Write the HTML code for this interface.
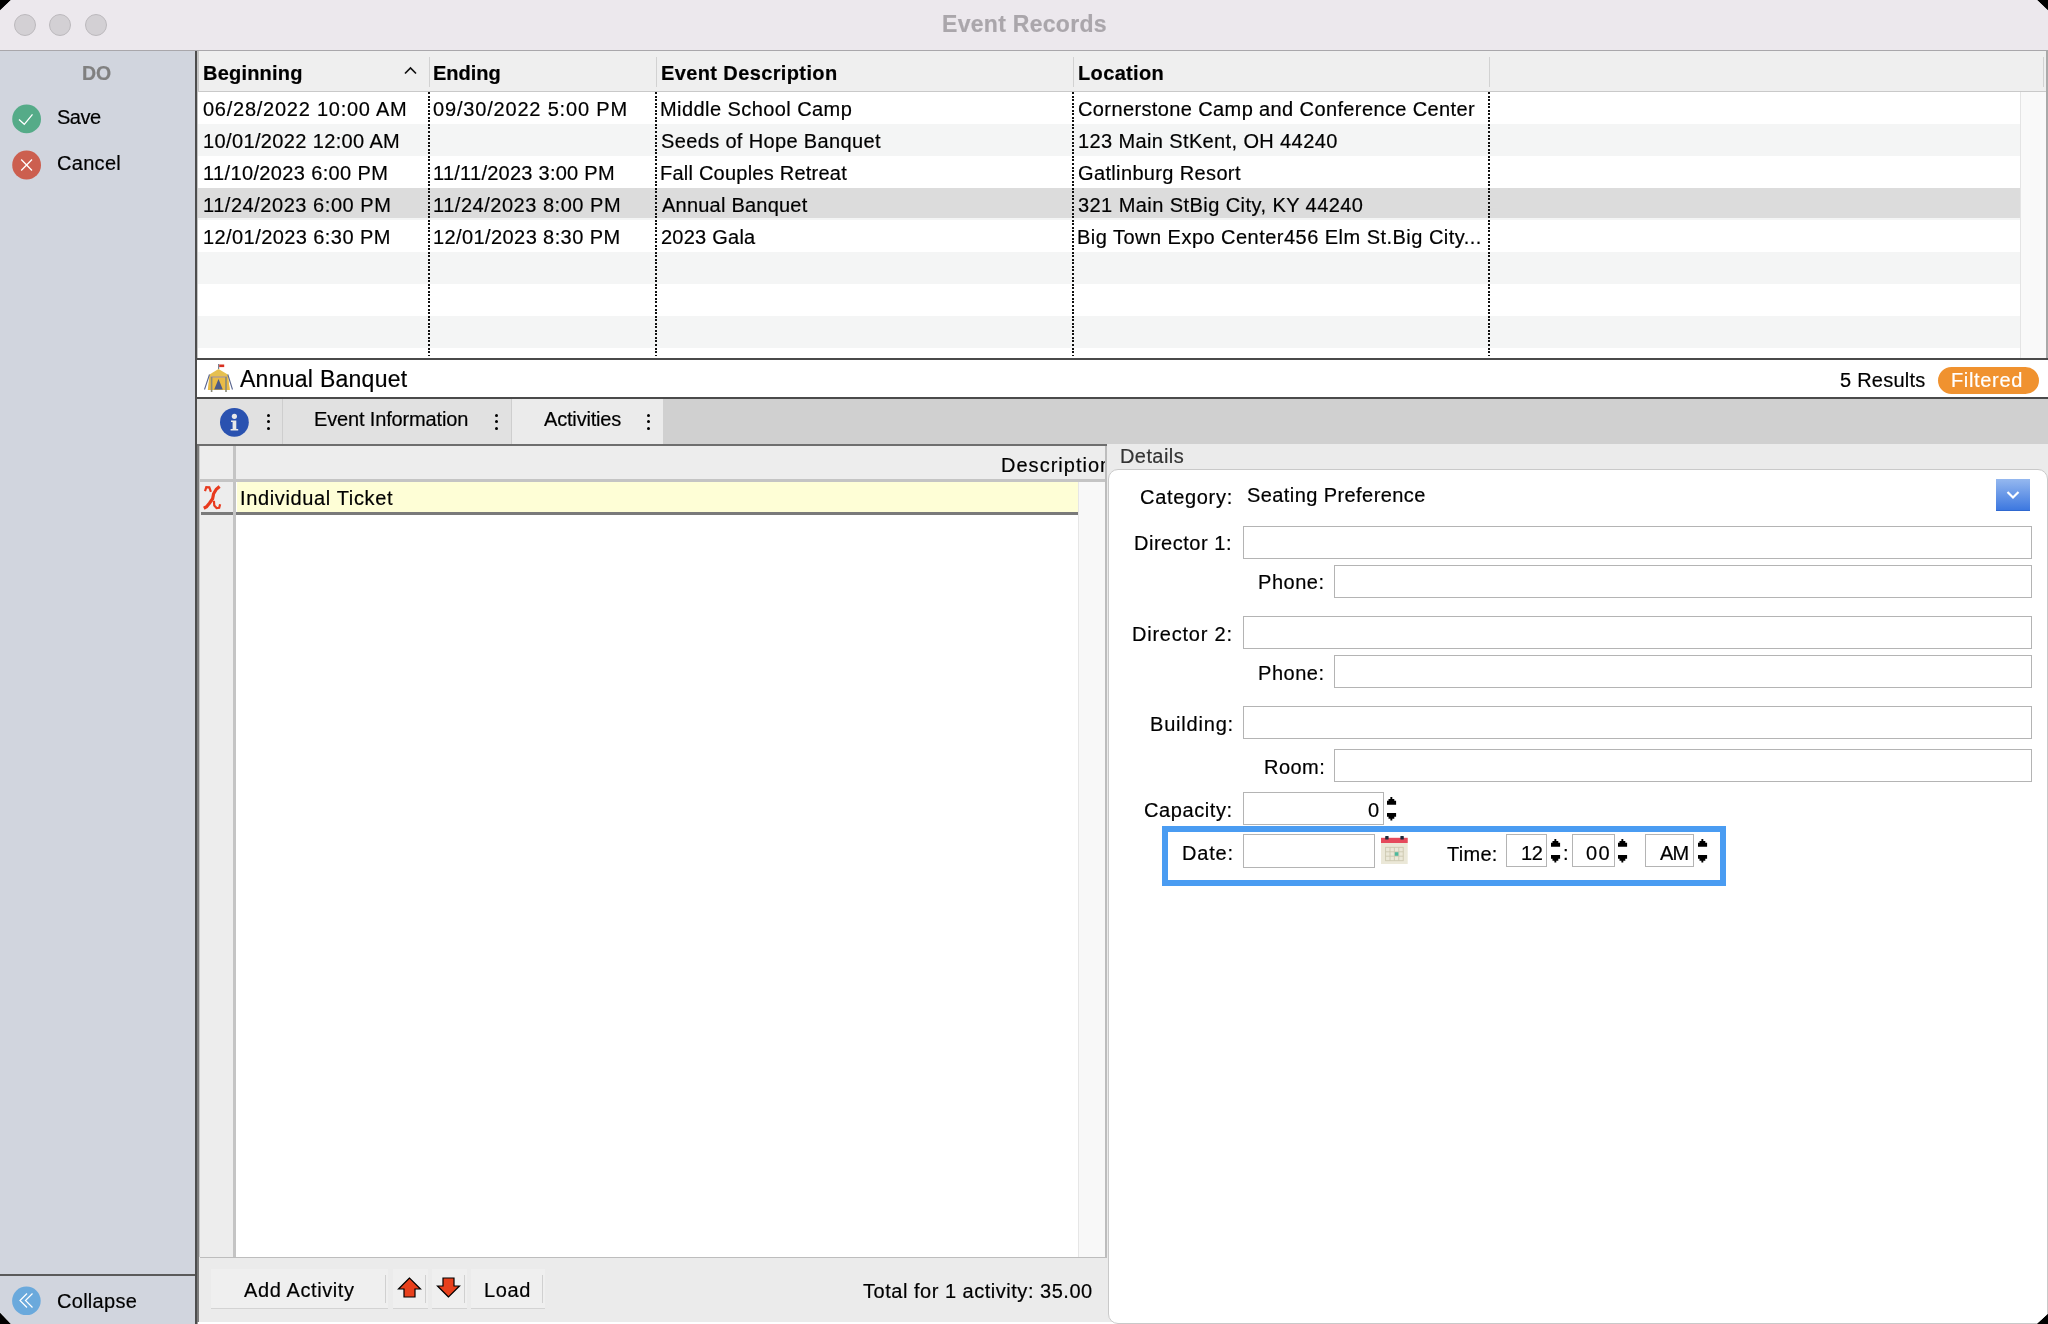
<!DOCTYPE html>
<html><head><meta charset="utf-8"><title>Event Records</title>
<style>
html,body{margin:0;padding:0;background:#000;}
body{width:2048px;height:1324px;overflow:hidden;position:relative;font-family:"Liberation Sans",sans-serif;}
#win{position:absolute;left:0;top:0;width:2048px;height:1324px;overflow:hidden;clip-path:polygon(11px 0,2037px 0,2048px 10.5px,2048px 1313.5px,2036.5px 1324px,11px 1324px,0 1312.5px,0 10.5px);background:#ebebeb;}
#win div,#win svg{position:absolute;}
.t{will-change:transform;white-space:pre;-webkit-text-stroke:0.2px currentColor;}
</style></head><body><div id="win">
<div style="left:0px;top:0px;width:2048px;height:50px;background:#ece8ed"></div>
<div style="left:0px;top:50px;width:2048px;height:1px;background:#a9a7ab"></div>
<div style="left:14px;top:14px;width:20px;height:20px;border-radius:50%;background:#d3d0d4;border:1px solid #bcb9bd"></div>
<div style="left:49px;top:14px;width:20px;height:20px;border-radius:50%;background:#d3d0d4;border:1px solid #bcb9bd"></div>
<div style="left:85px;top:14px;width:20px;height:20px;border-radius:50%;background:#d3d0d4;border:1px solid #bcb9bd"></div>
<div class="t" style="left:941.80px;top:10.10px;font-size:23px;line-height:28px;font-weight:700;letter-spacing:0.292px;color:#aaa6ab;">Event Records</div>
<div style="left:0px;top:51px;width:195px;height:1273px;background:#d1d5de"></div>
<div style="left:195px;top:51px;width:2px;height:1273px;background:#4d4d4d"></div>
<div style="left:197px;top:51px;width:1px;height:1273px;background:#9a9a9a"></div>
<div class="t" style="left:82.00px;top:62.06px;font-size:19.5px;line-height:23px;font-weight:700;letter-spacing:0.000px;color:#808080;">DO</div>
<svg style="left:12px;top:104px" width="30" height="30" viewBox="0 0 30 30"><circle cx="14.6" cy="14.9" r="14.4" fill="#55ab88"/><path d="M7 15.5 L12.3 20.3 L20.5 10.3" stroke="#fff" stroke-width="1.3" fill="none"/></svg>
<div class="t" style="left:57.00px;top:105.39px;font-size:20px;line-height:24px;font-weight:400;letter-spacing:-0.500px;color:#000;">Save</div>
<svg style="left:12px;top:150px" width="30" height="30" viewBox="0 0 30 30"><circle cx="14.6" cy="15" r="14.4" fill="#cc5f4f"/><path d="M9.2 9.5 L20 20.5 M20 9.5 L9.2 20.5" stroke="#fff" stroke-width="1.3" fill="none"/></svg>
<div class="t" style="left:57.00px;top:151.39px;font-size:20px;line-height:24px;font-weight:400;letter-spacing:0.300px;color:#000;">Cancel</div>
<div style="left:0px;top:1274px;width:195px;height:2px;background:#5a5a5a"></div>
<svg style="left:12px;top:1286px" width="30" height="30" viewBox="0 0 30 30"><circle cx="14.4" cy="14.8" r="14.3" fill="#6aa9dc"/><path d="M15 7.5 L8 14.5 L15 21.5 M20.5 7.5 L13.5 14.5 L20.5 21.5" stroke="#fff" stroke-width="1.2" fill="none"/></svg>
<div class="t" style="left:57.00px;top:1288.89px;font-size:20px;line-height:24px;font-weight:400;letter-spacing:0.286px;color:#000;">Collapse</div>
<div style="left:197px;top:51px;width:2px;height:307px;background:#c4c4c4"></div>
<div style="left:199px;top:51px;width:1849px;height:41px;background:#efefef"></div>
<div style="left:198px;top:91px;width:1850px;height:1px;background:#c9c9c9"></div>
<div style="left:429px;top:57px;width:1px;height:30px;background:#d2d2d2"></div>
<div style="left:656px;top:57px;width:1px;height:30px;background:#d2d2d2"></div>
<div style="left:1073px;top:57px;width:1px;height:30px;background:#d2d2d2"></div>
<div style="left:1489px;top:57px;width:1px;height:30px;background:#d2d2d2"></div>
<div style="left:2043px;top:57px;width:1px;height:30px;background:#d2d2d2"></div>
<div class="t" style="left:202.50px;top:61.29px;font-size:20px;line-height:24px;font-weight:700;letter-spacing:0.212px;color:#000;">Beginning</div>
<svg style="left:404px;top:66px" width="13" height="9" viewBox="0 0 13 9"><path d="M1 7.5 L6.5 2 L12 7.5" stroke="#111" stroke-width="1.7" fill="none"/></svg>
<div class="t" style="left:433.30px;top:61.29px;font-size:20px;line-height:24px;font-weight:700;letter-spacing:0.000px;color:#000;">Ending</div>
<div class="t" style="left:660.80px;top:61.29px;font-size:20px;line-height:24px;font-weight:700;letter-spacing:0.381px;color:#000;">Event Description</div>
<div class="t" style="left:1078.00px;top:61.29px;font-size:20px;line-height:24px;font-weight:700;letter-spacing:0.357px;color:#000;">Location</div>
<div style="left:198px;top:92px;width:1822px;height:32px;background:#ffffff"></div>
<div class="t" style="left:202.50px;top:96.69px;font-size:20px;line-height:24px;font-weight:400;letter-spacing:0.750px;color:#000;">06/28/2022 10:00 AM</div>
<div class="t" style="left:433.30px;top:96.69px;font-size:20px;line-height:24px;font-weight:400;letter-spacing:0.818px;color:#000;">09/30/2022 5:00 PM</div>
<div class="t" style="left:659.80px;top:96.69px;font-size:20px;line-height:24px;font-weight:400;letter-spacing:0.429px;color:#000;">Middle School Camp</div>
<div class="t" style="left:1078.00px;top:96.69px;font-size:20px;line-height:24px;font-weight:400;letter-spacing:0.386px;color:#000;">Cornerstone Camp and Conference Center</div>
<div style="left:198px;top:124px;width:1822px;height:32px;background:#f4f5f5"></div>
<div class="t" style="left:202.50px;top:128.69px;font-size:20px;line-height:24px;font-weight:400;letter-spacing:0.367px;color:#000;">10/01/2022 12:00 AM</div>
<div class="t" style="left:660.80px;top:128.69px;font-size:20px;line-height:24px;font-weight:400;letter-spacing:0.355px;color:#000;">Seeds of Hope Banquet</div>
<div class="t" style="left:1078.00px;top:128.69px;font-size:20px;line-height:24px;font-weight:400;letter-spacing:0.379px;color:#000;">123 Main StKent, OH 44240</div>
<div style="left:198px;top:156px;width:1822px;height:32px;background:#ffffff"></div>
<div class="t" style="left:202.50px;top:160.69px;font-size:20px;line-height:24px;font-weight:400;letter-spacing:0.365px;color:#000;">11/10/2023 6:00 PM</div>
<div class="t" style="left:433.30px;top:160.69px;font-size:20px;line-height:24px;font-weight:400;letter-spacing:0.259px;color:#000;">11/11/2023 3:00 PM</div>
<div class="t" style="left:659.80px;top:160.69px;font-size:20px;line-height:24px;font-weight:400;letter-spacing:0.232px;color:#000;">Fall Couples Retreat</div>
<div class="t" style="left:1078.00px;top:160.69px;font-size:20px;line-height:24px;font-weight:400;letter-spacing:0.356px;color:#000;">Gatlinburg Resort</div>
<div style="left:198px;top:188px;width:1822px;height:32px;background:#f4f5f5"></div>
<div style="left:198px;top:188px;width:1822px;height:30px;background:#dcdcdc"></div>
<div class="t" style="left:202.50px;top:192.69px;font-size:20px;line-height:24px;font-weight:400;letter-spacing:0.541px;color:#000;">11/24/2023 6:00 PM</div>
<div class="t" style="left:433.30px;top:192.69px;font-size:20px;line-height:24px;font-weight:400;letter-spacing:0.524px;color:#000;">11/24/2023 8:00 PM</div>
<div class="t" style="left:661.80px;top:192.69px;font-size:20px;line-height:24px;font-weight:400;letter-spacing:0.223px;color:#000;">Annual Banquet</div>
<div class="t" style="left:1078.00px;top:192.69px;font-size:20px;line-height:24px;font-weight:400;letter-spacing:0.436px;color:#000;">321 Main StBig City, KY 44240</div>
<div style="left:198px;top:220px;width:1822px;height:32px;background:#ffffff"></div>
<div class="t" style="left:202.50px;top:224.69px;font-size:20px;line-height:24px;font-weight:400;letter-spacing:0.424px;color:#000;">12/01/2023 6:30 PM</div>
<div class="t" style="left:433.30px;top:224.69px;font-size:20px;line-height:24px;font-weight:400;letter-spacing:0.406px;color:#000;">12/01/2023 8:30 PM</div>
<div class="t" style="left:660.80px;top:224.69px;font-size:20px;line-height:24px;font-weight:400;letter-spacing:0.238px;color:#000;">2023 Gala</div>
<div class="t" style="left:1077.00px;top:224.69px;font-size:20px;line-height:24px;font-weight:400;letter-spacing:0.473px;color:#000;">Big Town Expo Center456 Elm St.Big City...</div>
<div style="left:198px;top:252px;width:1822px;height:32px;background:#f4f5f5"></div>
<div style="left:198px;top:284px;width:1822px;height:32px;background:#ffffff"></div>
<div style="left:198px;top:316px;width:1822px;height:32px;background:#f4f5f5"></div>
<div style="left:198px;top:348px;width:1822px;height:10px;background:#ffffff"></div>
<div style="left:428px;top:92px;width:2px;height:264px;background:repeating-linear-gradient(to bottom,#111 0,#111 2px,transparent 2px,transparent 3.55px);width:2px"></div>
<div style="left:655px;top:92px;width:2px;height:264px;background:repeating-linear-gradient(to bottom,#111 0,#111 2px,transparent 2px,transparent 3.55px);width:2px"></div>
<div style="left:1072px;top:92px;width:2px;height:264px;background:repeating-linear-gradient(to bottom,#111 0,#111 2px,transparent 2px,transparent 3.55px);width:2px"></div>
<div style="left:1488px;top:92px;width:2px;height:264px;background:repeating-linear-gradient(to bottom,#111 0,#111 2px,transparent 2px,transparent 3.55px);width:2px"></div>
<div style="left:2020px;top:92px;width:26px;height:266px;background:#f9f9f9;border-left:1px solid #e4e4e4;box-sizing:border-box"></div>
<div style="left:2046px;top:51px;width:2px;height:307px;background:#a9a9a9"></div>
<div style="left:197px;top:358px;width:1851px;height:2px;background:#4a4a4a"></div>
<div style="left:197px;top:360px;width:1851px;height:37px;background:#fff"></div>
<div style="left:197px;top:397px;width:1851px;height:2px;background:#4a4a4a"></div>
<svg style="left:203px;top:362px" width="32" height="32" viewBox="203 362 32 32">
<path d="M218.5 369 L209.5 374.5 L207.8 390 L229.8 390 L227.8 374.5 Z" fill="#e6c050"/>
<path d="M209.8 376 L208 390 L229.8 390 L228 376 Z" fill="#ebb840" opacity="0.6"/>
<rect x="210.8" y="376" width="16" height="2" fill="#c2a67c"/>
<rect x="210.8" y="377" width="1.6" height="15" fill="#8b8a78"/>
<rect x="225.2" y="377" width="1.6" height="15" fill="#8b8a78"/>
<path d="M218.5 379 L214.2 389.5 L222.8 389.5 Z" fill="#4c5a88"/>
<rect x="218" y="364" width="1.2" height="5" fill="#7a8290"/>
<rect x="219.2" y="364.5" width="5" height="2.6" fill="#d83020"/>
<path d="M209.5 374.5 L204.5 389.5 M227.8 374.5 L232.5 389.5" stroke="#5a6690" stroke-width="1.1"/>
</svg>
<div class="t" style="left:240.00px;top:365.30px;font-size:23px;line-height:28px;font-weight:400;letter-spacing:0.269px;color:#000;">Annual Banquet</div>
<div class="t" style="left:1840.20px;top:368.09px;font-size:20px;line-height:24px;font-weight:400;letter-spacing:0.250px;color:#000;">5 Results</div>
<div style="left:1938px;top:367px;width:101px;height:27px;background:#f0922f;border-radius:13.5px"></div>
<div class="t" style="left:1951.00px;top:368.09px;font-size:20px;line-height:24px;font-weight:400;letter-spacing:0.657px;color:#fff;">Filtered</div>
<div style="left:197px;top:399px;width:1851px;height:45px;background:#d0d0d0"></div>
<div style="left:197px;top:399px;width:85px;height:45px;background:#e1e1e1"></div>
<div style="left:282px;top:399px;width:1px;height:45px;background:#cecece"></div>
<div style="left:283px;top:399px;width:228px;height:45px;background:#e1e1e1"></div>
<div style="left:511px;top:399px;width:1px;height:45px;background:#cecece"></div>
<div style="left:512px;top:399px;width:151px;height:45px;background:#ebebeb"></div>
<div style="left:197px;top:444px;width:909.5px;height:2px;background:#6e6e6e"></div>
<svg style="left:219px;top:407px" width="31" height="31" viewBox="219 407 31 31"><circle cx="234.4" cy="422.3" r="14.4" fill="#2a52b0"/><circle cx="234.4" cy="416.3" r="2.6" fill="#e8e8e8"/><path d="M231 420.5 L236.3 420.5 L236.3 429 L238.2 429 L238.2 430.6 L230.6 430.6 L230.6 429 L232.6 429 L232.6 422 L231 422 Z" fill="#e8e8e8"/></svg>
<div style="left:266.6px;top:413.8px;width:3px;height:3px;border-radius:50%;background:#000"></div>
<div style="left:266.6px;top:420.3px;width:3px;height:3px;border-radius:50%;background:#000"></div>
<div style="left:266.6px;top:426.8px;width:3px;height:3px;border-radius:50%;background:#000"></div>
<div style="left:495.1px;top:413.8px;width:3px;height:3px;border-radius:50%;background:#000"></div>
<div style="left:495.1px;top:420.3px;width:3px;height:3px;border-radius:50%;background:#000"></div>
<div style="left:495.1px;top:426.8px;width:3px;height:3px;border-radius:50%;background:#000"></div>
<div style="left:647.1px;top:413.8px;width:3px;height:3px;border-radius:50%;background:#000"></div>
<div style="left:647.1px;top:420.3px;width:3px;height:3px;border-radius:50%;background:#000"></div>
<div style="left:647.1px;top:426.8px;width:3px;height:3px;border-radius:50%;background:#000"></div>
<div class="t" style="left:313.80px;top:407.09px;font-size:20px;line-height:24px;font-weight:400;letter-spacing:-0.150px;color:#000;">Event Information</div>
<div class="t" style="left:543.90px;top:407.09px;font-size:20px;line-height:24px;font-weight:400;letter-spacing:-0.178px;color:#000;">Activities</div>
<div style="left:198px;top:446px;width:1850px;height:876px;background:#ebebeb"></div>
<div style="left:198px;top:1322px;width:1850px;height:2px;background:#fff"></div>
<div style="left:197px;top:446px;width:2px;height:876px;background:#7c7c7c"></div>
<div style="left:199px;top:446px;width:2px;height:811px;background:#c8c8c8"></div>
<div style="left:200px;top:446px;width:905px;height:811px;background:#fff"></div>
<div style="left:200px;top:446px;width:905px;height:33px;background:#ededed"></div>
<div style="left:200px;top:446px;width:33px;height:811px;background:#ededed"></div>
<div style="left:200px;top:479px;width:905px;height:3px;background:#c4c4c4"></div>
<div style="left:233px;top:446px;width:3px;height:811px;background:#c4c4c4"></div>
<div style="left:237px;top:482px;width:841px;height:30px;background:#fefed6"></div>
<div style="left:201px;top:512px;width:32px;height:2.5px;background:#7a7a7a"></div>
<div style="left:236px;top:512px;width:842px;height:2.5px;background:#7a7a7a"></div>
<div style="left:1078px;top:482px;width:27px;height:775px;background:#f8f8f8;border-left:1px solid #e6e6e6;box-sizing:border-box"></div>
<div style="left:1105px;top:446px;width:2px;height:811px;background:#bdbdbd"></div>
<div style="left:200px;top:1256.5px;width:907px;height:1.5px;background:#bdbdbd"></div>
<div class="t" style="left:1000.80px;top:452.79px;font-size:20px;line-height:24px;font-weight:400;letter-spacing:1.020px;color:#000;">Description</div>
<div style="left:1105px;top:446px;width:2px;height:34px;background:#bdbdbd"></div>
<div style="left:1107px;top:446px;width:14px;height:34px;background:#ebebeb"></div>
<svg style="left:202px;top:484px" width="22" height="28" viewBox="202 484 22 28"><g stroke="#e83a1e" fill="none" stroke-linejoin="miter" stroke-linecap="butt"><path d="M219.6 486.6 L216.3 489.3 L213.6 493.8 L212.6 498.8 L209.6 503 L206.6 506.8 L203.8 508.2" stroke-width="3.2"/><path d="M205 491.2 L206.3 487.2 L209.3 487.3 L210.9 491.8" stroke-width="2.2"/><path d="M213.9 500.8 L214.3 505.6 L216.6 508 L219.2 507.8 L220.1 504.2" stroke-width="2.2"/></g></svg>
<div class="t" style="left:240.20px;top:485.69px;font-size:20px;line-height:24px;font-weight:400;letter-spacing:0.637px;color:#000;">Individual Ticket</div>
<div style="left:211px;top:1269px;width:177px;height:40px;background:#efefef;border-bottom:1.5px solid #d3d3d3;box-sizing:border-box"></div>
<div style="left:385px;top:1275px;width:1px;height:28px;background:#d0d0d0"></div>
<div style="left:392.6px;top:1269px;width:35px;height:40px;background:#efefef;border-bottom:1.5px solid #d3d3d3;box-sizing:border-box"></div>
<div style="left:424.6px;top:1275px;width:1px;height:28px;background:#d0d0d0"></div>
<div style="left:431.8px;top:1269px;width:35px;height:40px;background:#efefef;border-bottom:1.5px solid #d3d3d3;box-sizing:border-box"></div>
<div style="left:463.8px;top:1275px;width:1px;height:28px;background:#d0d0d0"></div>
<div style="left:470.9px;top:1269px;width:74px;height:40px;background:#efefef;border-bottom:1.5px solid #d3d3d3;box-sizing:border-box"></div>
<div style="left:541.9px;top:1275px;width:1px;height:28px;background:#d0d0d0"></div>
<div class="t" style="left:244.00px;top:1278.39px;font-size:20px;line-height:24px;font-weight:400;letter-spacing:0.600px;color:#000;">Add Activity</div>
<div class="t" style="left:483.90px;top:1278.39px;font-size:20px;line-height:24px;font-weight:400;letter-spacing:0.667px;color:#000;">Load</div>
<svg style="left:396px;top:1276px" width="28" height="24" viewBox="396 1276 28 24"><path d="M409.5 1278 L398.5 1289 L404 1289 L404 1297 L415 1297 L415 1289 L420.5 1289 Z" fill="#e8401c" stroke="#000" stroke-width="1.2" stroke-linejoin="miter"/></svg>
<svg style="left:435px;top:1276px" width="28" height="24" viewBox="435 1276 28 24"><path d="M448.5 1297 L437.5 1286 L443 1286 L443 1278 L454 1278 L454 1286 L459.5 1286 Z" fill="#e8401c" stroke="#000" stroke-width="1.2"/></svg>
<div class="t" style="left:862.70px;top:1278.79px;font-size:20px;line-height:24px;font-weight:400;letter-spacing:0.519px;color:#000;">Total for 1 activity: 35.00</div>
<div class="t" style="left:1119.70px;top:444.29px;font-size:20px;line-height:24px;font-weight:400;letter-spacing:0.417px;color:#333;">Details</div>
<div style="left:1108px;top:468.5px;width:940px;height:855px;background:#fff;border:1.5px solid #c9c9c9;border-radius:10px;box-sizing:border-box"></div>
<div class="t" style="left:1140.00px;top:485.29px;font-size:20px;line-height:24px;font-weight:400;letter-spacing:0.688px;color:#000;">Category:</div>
<div class="t" style="left:1246.50px;top:483.39px;font-size:20px;line-height:24px;font-weight:400;letter-spacing:0.418px;color:#000;">Seating Preference</div>
<div style="left:1996px;top:479px;width:34px;height:32px;background:linear-gradient(#95b8ef,#3d78e0);border-bottom:1px solid #2f68d0;box-sizing:border-box"></div>
<svg style="left:2005px;top:489px" width="16" height="12" viewBox="0 0 16 12"><path d="M2.5 3 L8 8.5 L13.5 3" stroke="#fff" stroke-width="2.2" fill="none"/></svg>
<div style="left:1243.2px;top:525.7px;width:788.6px;height:33px;background:#fff;border:1.2px solid #b4b4b4;box-sizing:border-box"></div>
<div class="t" style="left:1133.70px;top:531.49px;font-size:20px;line-height:24px;font-weight:400;letter-spacing:0.520px;color:#000;">Director 1:</div>
<div style="left:1334.4px;top:564.8px;width:697.4px;height:33px;background:#fff;border:1.2px solid #b4b4b4;box-sizing:border-box"></div>
<div class="t" style="left:1258.00px;top:570.49px;font-size:20px;line-height:24px;font-weight:400;letter-spacing:0.540px;color:#000;">Phone:</div>
<div style="left:1243.2px;top:616.3px;width:788.6px;height:33.2px;background:#fff;border:1.2px solid #b4b4b4;box-sizing:border-box"></div>
<div class="t" style="left:1132.20px;top:622.19px;font-size:20px;line-height:24px;font-weight:400;letter-spacing:0.770px;color:#000;">Director 2:</div>
<div style="left:1334.4px;top:655.3px;width:697.4px;height:33.2px;background:#fff;border:1.2px solid #b4b4b4;box-sizing:border-box"></div>
<div class="t" style="left:1258.00px;top:660.89px;font-size:20px;line-height:24px;font-weight:400;letter-spacing:0.540px;color:#000;">Phone:</div>
<div style="left:1243.2px;top:706.3px;width:788.6px;height:33.2px;background:#fff;border:1.2px solid #b4b4b4;box-sizing:border-box"></div>
<div class="t" style="left:1149.50px;top:712.39px;font-size:20px;line-height:24px;font-weight:400;letter-spacing:0.800px;color:#000;">Building:</div>
<div style="left:1334.1px;top:749.3px;width:697.7px;height:32.8px;background:#fff;border:1.2px solid #b4b4b4;box-sizing:border-box"></div>
<div class="t" style="left:1263.60px;top:754.99px;font-size:20px;line-height:24px;font-weight:400;letter-spacing:0.475px;color:#000;">Room:</div>
<div style="left:1243.2px;top:791.6px;width:140.4px;height:33px;background:#fff;border:1.2px solid #b4b4b4;box-sizing:border-box"></div>
<div class="t" style="left:1143.60px;top:797.69px;font-size:20px;line-height:24px;font-weight:400;letter-spacing:0.600px;color:#000;">Capacity:</div>
<div class="t" style="left:1366.50px;top:797.69px;font-size:20px;line-height:24px;font-weight:400;letter-spacing:0.000px;color:#000;margin-left:1.3px">0</div>
<svg style="left:1386.9px;top:797px" width="10" height="24" viewBox="0 0 10 24"><path d="M3.4 0 H5.3 V1.9 H7.3 V3.8 H9.1 V7.7 H0 V3.8 H1.5 V1.9 H3.4 Z M0 16.1 H9.1 V19.8 H7.3 V21.7 H5.3 V23.6 H3.4 V21.7 H1.5 V19.8 H0 Z" fill="#000"/></svg>
<div style="left:1162px;top:826px;width:564px;height:60px;border:6px solid #4a9cf2;box-sizing:border-box"></div>
<div class="t" style="left:1181.90px;top:841.49px;font-size:20px;line-height:24px;font-weight:400;letter-spacing:0.825px;color:#000;">Date:</div>
<div style="left:1243.2px;top:834.4px;width:131.6px;height:33.2px;background:#fff;border:1.2px solid #b4b4b4;box-sizing:border-box"></div>
<svg style="left:1381px;top:836px" width="27" height="28" viewBox="0 0 27 28">
<rect x="0" y="2" width="26.7" height="26" fill="#ebe8d8"/>
<rect x="0" y="1.8" width="26.7" height="5.2" fill="#e54a5c"/>
<rect x="4.2" y="0" width="3.4" height="3.6" rx="0.6" fill="#1f2a3a"/><rect x="19.4" y="0" width="3.4" height="3.6" rx="0.6" fill="#1f2a3a"/>
<g stroke="#cdc8b0" stroke-width="0.9" fill="none"><rect x="4.6" y="11.3" width="17.6" height="13.4"/><path d="M9 11.3 V24.7 M13.4 11.3 V24.7 M17.8 11.3 V24.7 M4.6 15.8 H22.2 M4.6 20.2 H22.2"/></g>
<rect x="13.8" y="16.2" width="3.6" height="3.6" fill="#4db89c"/>
</svg>
<div class="t" style="left:1446.90px;top:841.89px;font-size:20px;line-height:24px;font-weight:400;letter-spacing:0.275px;color:#000;">Time:</div>
<div style="left:1506.2px;top:834.2px;width:40.4px;height:33.3px;background:#fff;border:1.2px solid #b4b4b4;box-sizing:border-box"></div>
<div class="t" style="left:1521.30px;top:840.59px;font-size:20px;line-height:24px;font-weight:400;letter-spacing:-0.400px;color:#000;">12</div>
<svg style="left:1550.7px;top:839.1px" width="10" height="24" viewBox="0 0 10 24"><path d="M3.4 0 H5.3 V1.9 H7.3 V3.8 H9.1 V7.7 H0 V3.8 H1.5 V1.9 H3.4 Z M0 16.1 H9.1 V19.8 H7.3 V21.7 H5.3 V23.6 H3.4 V21.7 H1.5 V19.8 H0 Z" fill="#000"/></svg>
<div class="t" style="left:1562.70px;top:840.59px;font-size:20px;line-height:24px;font-weight:400;letter-spacing:0.000px;color:#000;">:</div>
<div style="left:1572px;top:834.2px;width:42.5px;height:33.3px;background:#fff;border:1.2px solid #b4b4b4;box-sizing:border-box"></div>
<div class="t" style="left:1585.90px;top:840.59px;font-size:20px;line-height:24px;font-weight:400;letter-spacing:1.500px;color:#000;">00</div>
<svg style="left:1617.7px;top:839.1px" width="10" height="24" viewBox="0 0 10 24"><path d="M3.4 0 H5.3 V1.9 H7.3 V3.8 H9.1 V7.7 H0 V3.8 H1.5 V1.9 H3.4 Z M0 16.1 H9.1 V19.8 H7.3 V21.7 H5.3 V23.6 H3.4 V21.7 H1.5 V19.8 H0 Z" fill="#000"/></svg>
<div style="left:1645px;top:834.2px;width:49px;height:33.3px;background:#fff;border:1.2px solid #b4b4b4;box-sizing:border-box"></div>
<div class="t" style="left:1659.80px;top:840.59px;font-size:20px;line-height:24px;font-weight:400;letter-spacing:-0.800px;color:#000;">AM</div>
<svg style="left:1697.8px;top:839.1px" width="10" height="24" viewBox="0 0 10 24"><path d="M3.4 0 H5.3 V1.9 H7.3 V3.8 H9.1 V7.7 H0 V3.8 H1.5 V1.9 H3.4 Z M0 16.1 H9.1 V19.8 H7.3 V21.7 H5.3 V23.6 H3.4 V21.7 H1.5 V19.8 H0 Z" fill="#000"/></svg>
</div></body></html>
